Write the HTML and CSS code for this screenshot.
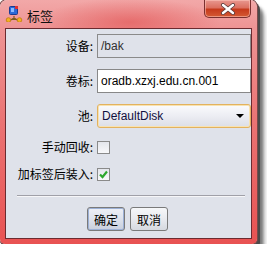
FILE: index.html
```html
<!DOCTYPE html>
<html lang="zh">
<head>
    <meta charset="UTF-8">
    <meta name="viewport" content="width=device-width, initial-scale=1.0">
    <title>标签</title>
    <link rel="stylesheet" href="styles.css">
</head>
<body>
    <div class="window">
        <div class="titlebar">
            <!-- Programmsymbol -->
            <svg class="app-icon" width="18" height="18" viewBox="0 0 18 18">
                <path d="M9 12 V16 M4 17 L9 14 L14 17" stroke="#7a5a20" stroke-width="1.2" fill="none"/>
                <rect x="4.5" y="2.5" width="8" height="8" rx="1" fill="#2a6ad8" stroke="#1a3a90"/>
                <rect x="6" y="4" width="3" height="4" fill="#8ab8ff"/>
                <rect x="10" y="2" width="3" height="3" fill="#e03030"/>
                <circle cx="3.5" cy="16" r="2.3" fill="#f4b020" stroke="#c07a10" stroke-width="0.8"/>
                <circle cx="14.5" cy="16" r="2.3" fill="#f4b020" stroke="#c07a10" stroke-width="0.8"/>
            </svg>
            <span class="title">标签</span>
            <button class="close" type="button">
                <svg width="18" height="12" viewBox="0 0 18 12">
                    <path d="M4 2 L14 10 M14 2 L4 10" stroke="#5a3a3a" stroke-width="4" stroke-linecap="round"/>
                    <path d="M4 2 L14 10 M14 2 L4 10" stroke="#ffffff" stroke-width="2.4" stroke-linecap="round"/>
                </svg>
            </button>
        </div>

        <div class="panel">
            <div class="form">
                <label>设备:</label>
                <div class="field disabled">/bak</div>

                <label for="volume">卷标:</label>
                <input class="field" id="volume" type="text" value="oradb.xzxj.edu.cn.001">

                <label>池:</label>
                <div class="combo">DefaultDisk<span class="arrow"></span></div>

                <label>手动回收:</label>
                <span class="check"></span>

                <label>加标签后装入:</label>
                <span class="check">
                    <svg width="11" height="11" viewBox="0 0 11 11">
                        <path d="M2 5.5 L4.5 8 L9 2.5" stroke="#2ea82e" stroke-width="2.2" fill="none"/>
                    </svg>
                </span>
            </div>

            <div class="separator"></div>

            <div class="buttons">
                <button class="btn default" type="button">确定</button>
                <button class="btn" type="button">取消</button>
            </div>
        </div>
    </div>
</body>
</html>
```

FILE: styles.css
```css
body {
    margin: 0;
    background: #ffffff;
    font-family: "Liberation Sans", "Noto Sans CJK SC", sans-serif;
    font-size: 12px;
    color: #000000;
}
.window {
    width: 257px;
    height: 244px;
    box-sizing: border-box;
    display: flex;
    flex-direction: column;
    padding: 0 5px 5px 5px;
    border-radius: 7px 7px 5px 5px;
    background:
        radial-gradient(ellipse 90px 24px at 130px 22px, rgba(225, 80, 80, 0.6), rgba(225, 80, 80, 0)),
        linear-gradient(to bottom, #f2a8a8 0, #ee9494 28px, #eb7474 120px, #e85252 100%);
    box-shadow:
        0 0 0 1px #7a4a4a,
        2px 3px 0 1px #4a4a4a,
        5px 7px 3px 1px rgba(60, 60, 60, 0.55),
        8px 11px 4px 0 rgba(120, 120, 120, 0.45);
}
.titlebar {
    height: 28px;
    display: flex;
    align-items: flex-start;
    margin: 0 -5px;
    padding-left: 5px;
}
.app-icon {
    margin-top: 4px;
}
.title {
    margin-top: 6px;
    margin-left: 4px;
    font-family: "Noto Sans CJK SC", sans-serif;
    font-size: 13px;
    color: #101010;
}
.close {
    margin-left: auto;
    margin-right: 6px;
    width: 47px;
    height: 18px;
    padding: 0;
    display: flex;
    align-items: center;
    justify-content: center;
    border: 1px solid #7a3030;
    border-top: none;
    border-radius: 0 0 5px 5px;
    background: linear-gradient(to bottom, #e89890 0, #dc7060 45%, #c63a1c 55%, #d45a34 100%);
    box-shadow: inset 0 0 0 1px rgba(255, 200, 190, 0.55);
}
.panel {
    flex: 1;
    display: flex;
    flex-direction: column;
    border: 1px solid #6b2b30;
    background: #dfe2ea;
    padding: 5px 6px 7px 6px;
}
.form {
    display: grid;
    grid-template-columns: 81px 154px;
    grid-template-rows: 24px 24px 24px 16px 16px;
    column-gap: 4px;
    row-gap: 11px;
    align-items: center;
}
.form label {
    text-align: right;
    font-family: "Noto Sans CJK SC", sans-serif;
    font-size: 12px;
    line-height: 16px;
}
.field {
    box-sizing: border-box;
    width: 154px;
    height: 24px;
    margin: 0;
    padding: 0 0 0 3px;
    border: 1px solid #888888;
    background: #ffffff;
    font-family: "Liberation Sans", sans-serif;
    font-size: 12px;
    color: #000000;
    display: flex;
    align-items: center;
    outline: none;
}
.field.disabled {
    background: #dfe2ea;
    color: #303030;
    border-color: #8a8a8a;
}
.combo {
    box-sizing: border-box;
    height: 24px;
    padding: 0 0 0 4px;
    display: flex;
    align-items: center;
    border: 1px solid #e3b25e;
    border-radius: 3px;
    background: linear-gradient(to bottom, #fbfbfd 0, #ecedf3 50%, #dcdee6 100%);
    box-shadow: inset 0 0 0 1px #f8e2b0;
    font-size: 12px;
    color: #101040;
}
.arrow {
    margin-left: auto;
    margin-right: 6px;
    width: 0;
    height: 0;
    border-left: 4px solid transparent;
    border-right: 4px solid transparent;
    border-top: 4px solid #000000;
}
.check {
    box-sizing: border-box;
    width: 13px;
    height: 13px;
    border: 1px solid #8a8a8a;
    background: linear-gradient(to bottom, #e4e6ec, #f8f8fa);
    display: flex;
    align-items: center;
    justify-content: center;
}
.separator {
    margin: 13px 0 10px 5px;
    border-top: 1px solid #a0a0a8;
    border-bottom: 1px solid #f6f6f8;
    height: 0;
}
.buttons {
    display: flex;
    justify-content: center;
    gap: 5px;
    padding-right: 2px;
}
.btn {
    width: 38px;
    height: 24px;
    padding: 0;
    border: 1px solid #7a7a7a;
    border-radius: 3px;
    background: linear-gradient(to bottom, #f6f7f9 0, #e8eaef 50%, #d6d9e0 100%);
    font-family: "Noto Sans CJK SC", sans-serif;
    font-size: 12px;
    color: #000000;
}
.btn.default {
    box-shadow: inset 0 0 0 1px #9cb0d6;
    background: linear-gradient(to bottom, #eef0f6 0, #dde2ec 50%, #c8cfdd 100%);
}
```
